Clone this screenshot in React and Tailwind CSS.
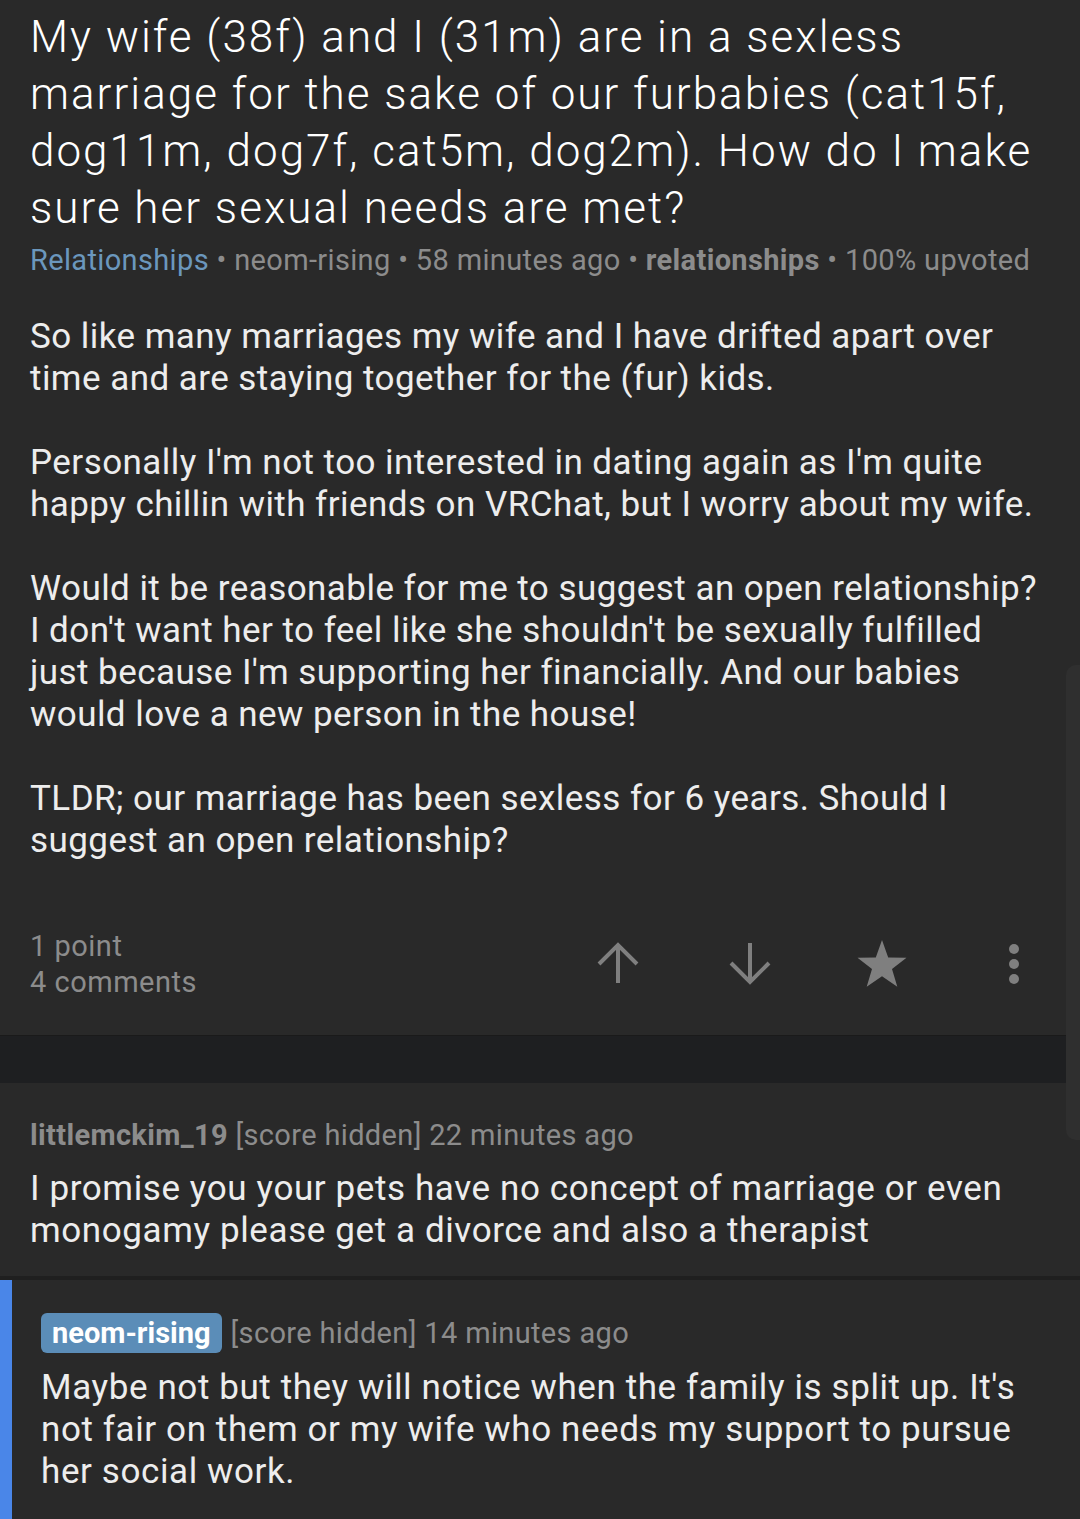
import React from 'react';

const font = { fontFamily: 'Roboto, "Liberation Sans", sans-serif' };

function ArrowUp() {
  return (
    <svg width="44" height="44" viewBox="0 0 44 44" className="shrink-0 text-[#7f7f7f]">
      <path d="M22 3 L22 41 M3 22 L22 3 L41 22" fill="none" stroke="currentColor" strokeWidth="4" />
    </svg>
  );
}

function ArrowDown() {
  return (
    <svg width="44" height="44" viewBox="0 0 44 44" className="shrink-0 text-[#7f7f7f]">
      <path d="M22 1 L22 40 M3 21 L22 40 L41 21" fill="none" stroke="currentColor" strokeWidth="4" />
    </svg>
  );
}

function Star() {
  return (
    <svg width="52" height="50" viewBox="0 0 52 50" className="shrink-0 text-[#7f7f7f]">
      <path d="M26 1 L32.2 18.5 L50.5 18.8 L36 30 L41.3 47.8 L26 37.2 L10.7 47.8 L16 30 L1.5 18.8 L19.8 18.5 Z" fill="currentColor" />
    </svg>
  );
}

function Dots() {
  return (
    <svg width="12" height="44" viewBox="0 0 12 44" className="shrink-0 text-[#7f7f7f]">
      <circle cx="6" cy="7" r="5" fill="currentColor" />
      <circle cx="6" cy="22" r="5" fill="currentColor" />
      <circle cx="6" cy="37" r="5" fill="currentColor" />
    </svg>
  );
}

export default function App() {
  return (
    <div className="relative flex min-h-[1519px] w-[1080px] flex-col overflow-hidden bg-[#292929]" style={font}>
      {/* faint scroll thumb on the right */}
      <div className="absolute right-0 top-[665px] h-[475px] w-[14px] rounded-l-[10px] bg-[#2f2f2f]" />

      {/* Post */}
      <div className="px-[30px] pt-[9px]">
        <h1 className="text-[44px] font-light leading-[57px] tracking-[2px] text-white">
          My wife (38f) and I (31m) are in a sexless marriage for the sake of our furbabies (cat15f, dog11m, dog7f, cat5m, dog2m). How do I make sure her sexual needs are met?
        </h1>
        <div className="mt-[5px] text-[29px] leading-[36px] tracking-[0.35px] text-[#8c8c8c]">
          <span className="text-[#6b97bd]">Relationships</span> • neom-rising • 58 minutes ago • <span className="font-bold">relationships</span> • 100% upvoted
        </div>

        <div className="mt-[38px] flex flex-col gap-[42px] text-[35px] leading-[42px] tracking-[0.45px] text-[#ededed]">
          <p>So like many marriages my wife and I have drifted apart over time and are staying together for the (fur) kids.</p>
          <p>Personally I'm not too interested in dating again as I'm quite happy chillin with friends on VRChat, but I worry about my wife.</p>
          <p>Would it be reasonable for me to suggest an open relationship? I don't want her to feel like she shouldn't be sexually fulfilled just because I'm supporting her financially. And our babies would love a new person in the house!</p>
          <p>TLDR; our marriage has been sexless for 6 years. Should I suggest an open relationship?</p>
        </div>

        <div className="mt-[67px] flex h-[70px] items-center">
          <div className="flex-1 text-[29px] leading-[36px] tracking-[0.5px] text-[#8c8c8c]">
            <div>1 point</div>
            <div>4 comments</div>
          </div>
          <div className="mr-[14px] flex items-center gap-[88px]">
            <div className="flex w-[44px] justify-center"><ArrowUp /></div>
            <div className="flex w-[44px] justify-center"><ArrowDown /></div>
            <div className="flex w-[44px] justify-center"><Star /></div>
            <div className="flex w-[44px] justify-center"><Dots /></div>
          </div>
        </div>
      </div>

      <div className="mt-[36px] h-[48px] border-t border-[#1a1a1a] bg-[#1e1f21]" />

      {/* Comment 1 */}
      <div className="border-b-[4px] border-[#1f1f1f] px-[30px] pb-[24px] pt-[34px]">
        <div className="text-[29px] leading-[36px] tracking-[0.35px] text-[#8c8c8c]">
          <span className="font-bold">littlemckim_19</span> [score hidden] 22 minutes ago
        </div>
        <p className="mt-[15px] text-[35px] leading-[42px] tracking-[0.6px] text-[#ededed]">
          I promise you your pets have no concept of marriage or even monogamy please get a divorce and also a therapist
        </p>
      </div>

      {/* Comment 2 (own) */}
      <div className="flex flex-1">
        <div className="w-[12px] shrink-0 bg-[#4a86e8]" />
        <div className="flex-1 pl-[29px] pr-[30px] pt-[33px] pb-[30px]">
          <div className="flex items-center text-[29px] leading-[36px] tracking-[0.35px] text-[#8c8c8c]">
            <span className="rounded-[6px] bg-[#5b8db8] px-[11px] py-[2px] font-bold tracking-normal text-white">neom-rising</span>
            <span className="ml-[9px]">[score hidden] 14 minutes ago</span>
          </div>
          <p className="mt-[14px] text-[35px] leading-[42px] tracking-[0.6px] text-[#ededed]">
            Maybe not but they will notice when the family is split up. It's not fair on them or my wife who needs my support to pursue her social work.
          </p>
        </div>
      </div>
    </div>
  );
}
